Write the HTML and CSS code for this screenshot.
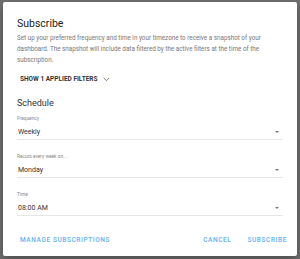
FILE: index.html
```html
<!DOCTYPE html>
<html lang="en">
<head>
    <meta charset="UTF-8">
    <meta name="viewport" content="width=device-width, initial-scale=1.0">
    <title>Subscribe</title>
    <link rel="stylesheet" href="styles.css">
</head>
<body>
    <div class="dialog">
        <h2 class="title">Subscribe</h2>
        <p class="description">
            Set up your preferred frequency and time in your timezone to receive a snapshot of your
            dashboard. The snapshot will include data filtered by the active filters at the time of the
            subscription.
        </p>

        <button type="button" class="filters-toggle">
            SHOW 1 APPLIED FILTERS
            <svg class="chevron" width="7" height="5" viewBox="0 0 7 5">
                <path d="M0.8 1 L3.5 3.7 L6.2 1" fill="none" stroke="#555" stroke-width="0.8"/>
            </svg>
        </button>

        <h3 class="section-title">Schedule</h3>

        <div class="field">
            <label class="field-label">Frequency</label>
            <div class="select">
                <span>Weekly</span>
                <span class="arrow"></span>
            </div>
        </div>

        <div class="field">
            <label class="field-label">Recurs every week on...</label>
            <div class="select">
                <span>Monday</span>
                <span class="arrow"></span>
            </div>
        </div>

        <div class="field">
            <label class="field-label">Time</label>
            <div class="select">
                <span>08:00 AM</span>
                <span class="arrow"></span>
            </div>
        </div>

        <div class="actions">
            <button type="button" class="text-btn">MANAGE SUBSCRIPTIONS</button>
            <div class="actions-right">
                <button type="button" class="text-btn">CANCEL</button>
                <button type="button" class="text-btn">SUBSCRIBE</button>
            </div>
        </div>
    </div>
</body>
</html>
```

FILE: styles.css
```css
* {
    margin: 0;
    padding: 0;
    box-sizing: border-box;
}

body {
    font-family: Roboto, 'Liberation Sans', sans-serif;
    background: #6f6f6f;
    height: 259px;
    overflow: hidden;
    padding: 2px 3px 0 3px;
}

.dialog {
    background: #fff;
    width: 294px;
    height: 254px;
    border-radius: 2px;
    box-shadow: 0 4px 10px rgba(0, 0, 0, 0.3);
    padding: 16px 14px 0 14px;
}

.title {
    font-size: 10.5px;
    font-weight: 400;
    color: #222;
    line-height: 12px;
    margin-bottom: 3px;
}

.description {
    font-size: 6.3px;
    line-height: 11px;
    color: #777;
    margin-bottom: 6px;
}

.filters-toggle {
    display: flex;
    align-items: center;
    gap: 5px;
    background: none;
    border: none;
    font-family: inherit;
    font-size: 6.5px;
    font-weight: 700;
    color: #333;
    padding: 0 3px;
    height: 14px;
    margin-bottom: 11px;
}

.section-title {
    font-size: 9px;
    font-weight: 400;
    color: #333;
    line-height: 12px;
    margin-bottom: 6px;
}

.field {
    margin-bottom: 13px;
}

.field-label {
    display: block;
    font-size: 4.8px;
    color: #888;
    line-height: 8px;
    margin-bottom: 2px;
}

.select {
    display: flex;
    align-items: center;
    justify-content: space-between;
    font-size: 7px;
    color: #333;
    height: 15px;
    border-bottom: 1px solid #e6e6e6;
    padding: 1px 4px 1px 1px;
}

.arrow {
    width: 0;
    height: 0;
    border-left: 2.5px solid transparent;
    border-right: 2.5px solid transparent;
    border-top: 2.5px solid #777;
}

.actions {
    display: flex;
    justify-content: space-between;
    align-items: center;
    margin-top: 17px;
    margin-right: -7px;
}

.actions-right {
    display: flex;
    gap: 10px;
}

.text-btn {
    background: none;
    border: none;
    font-family: inherit;
    font-size: 6.5px;
    font-weight: 500;
    letter-spacing: 0.6px;
    color: #5fb0f0;
    padding: 0 3px;
    height: 14px;
}
```
